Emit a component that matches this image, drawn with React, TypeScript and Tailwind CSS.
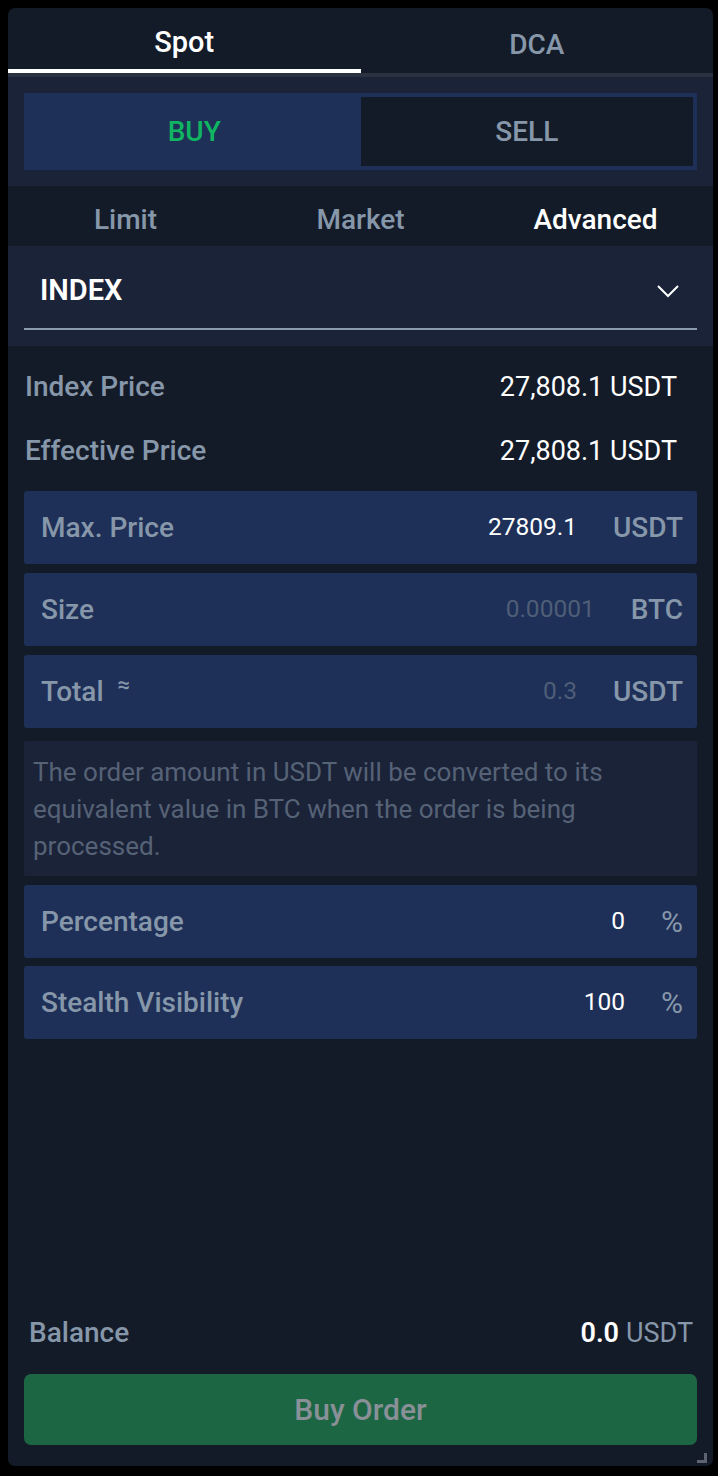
import React from "react";

const font = { fontFamily: "Roboto, 'Noto Sans', sans-serif" };

function Field({ label, value, unit, valueClass, unitClass, extra }: { label: string; value: string; unit: string; valueClass: string; unitClass?: string; extra?: React.ReactNode }) {
  return (
    <div className="flex h-[73px] items-center rounded-[3px] bg-[#1e3058] pl-[17px] pr-[14px] text-[28px] font-medium">
      <div className="flex flex-1 items-center text-[#8797aa]">
        <span>{label}</span>
        {extra}
      </div>
      <span className={"text-[24.5px] font-normal " + valueClass}>{value}</span>
      <span className={"text-[#8797aa] " + (unitClass ?? "ml-[36px]")}>{unit}</span>
    </div>
  );
}

export default function App() {
  return (
    <div className="h-[1476px] w-[718px] bg-black pl-[8px] pr-[5px] pt-[8px] pb-[10px]" style={font}>
      <div className="relative flex h-full flex-col overflow-hidden rounded-[7px] bg-[#141b28]">
        {/* tabs */}
        <div className="flex h-[65px]">
          <div className="flex flex-1 items-center justify-center border-b-[4px] border-white pt-[8px] text-[29px] font-medium text-white">Spot</div>
          <div className="flex flex-1 items-center justify-center border-b-[4px] border-transparent pt-[12px] text-[28px] font-medium text-[#8797aa]">DCA</div>
        </div>
        <div className="h-[4px] bg-[#2a3141]" />
        {/* buy/sell */}
        <div className="bg-[#1b2339] px-[16px] pt-[16px] pb-[16px]">
          <div className="grid h-[77px] grid-cols-2 bg-[#1e3058] p-[4px]">
            <div className="flex items-center justify-center text-[28px] font-medium text-[#10b561]">BUY</div>
            <div className="flex items-center justify-center bg-[#141b28] text-[28px] font-medium text-[#8797aa]">SELL</div>
          </div>
        </div>
        {/* order type */}
        <div className="grid h-[60px] grid-cols-3 bg-[#141b28] pt-[8px] text-[28px] font-medium">
          <div className="flex items-center justify-center text-[#8797aa]">Limit</div>
          <div className="flex items-center justify-center text-[#8797aa]">Market</div>
          <div className="flex items-center justify-center text-white">Advanced</div>
        </div>
        {/* index select */}
        <div className="bg-[#1b2339] px-[16px] pb-[16px]">
          <div className="flex h-[84px] items-center border-b-[2px] border-[#8a9bb0] pl-[16px] pr-[18px] pt-[8px]">
            <span className="flex-1 text-[29px] font-semibold text-white">INDEX</span>
            <svg width="22" height="14" viewBox="0 0 22 14" fill="none" stroke="white" strokeWidth="2">
              <path d="M1 2 L11 12 L21 2" />
            </svg>
          </div>
        </div>
        {/* content */}
        <div className="flex flex-1 flex-col px-[16px] pt-[9px]">
          <div className="flex h-[64px] items-center pl-[1px] pr-[20px] text-[28px]">
            <span className="flex-1 font-medium text-[#8797aa]">Index Price</span>
            <span className="text-[27px] text-white">27,808.1 USDT</span>
          </div>
          <div className="flex h-[64px] items-center pl-[1px] pr-[20px] text-[28px]">
            <span className="flex-1 font-medium text-[#8797aa]">Effective Price</span>
            <span className="text-[27px] text-white">27,808.1 USDT</span>
          </div>
          <div className="mt-[8px] flex flex-col gap-[9px]">
            <Field label="Max. Price" value="27809.1" unit="USDT" valueClass="text-white" />
            <Field label="Size" value="0.00001" unit="BTC" valueClass="text-[#4f5e77]" />
            <Field
              label="Total"
              value="0.3"
              unit="USDT"
              valueClass="text-[#4f5e77]"
              extra={<span className="ml-[14px] -translate-y-[7px] text-[22px]">≈</span>}
            />
          </div>
          <div className="mt-[13px] h-[135px] rounded-[2px] bg-[#1b2339] pl-[9px] pr-[12px] pt-[13px] text-[26px] leading-[37px] text-[#566276]">
            The order amount in USDT will be converted to its equivalent value in BTC when the order is being processed.
          </div>
          <div className="mt-[9px] flex flex-col gap-[8px]">
            <Field label="Percentage" value="0" unit="%" valueClass="text-white" unitClass="ml-[36px] text-[30px] font-normal" />
            <Field label="Stealth Visibility" value="100" unit="%" valueClass="text-white" unitClass="ml-[36px] text-[30px] font-normal" />
          </div>
          <div className="flex-1" />
          <div className="flex items-center pl-[5px] pr-[4px] text-[28px] font-medium">
            <span className="flex-1 text-[#8797aa]">Balance</span>
            <span className="text-[27px] font-semibold text-white">0.0</span>
            <span className="ml-[7px] text-[27px] font-normal text-[#8797aa]">USDT</span>
          </div>
          <div className="mt-[20px] mb-[21px] flex h-[71px] items-center justify-center rounded-[7px] bg-[#1d6644] text-[30px] font-medium text-[#8a9097]">
            Buy Order
          </div>
        </div>
        <div className="absolute bottom-[3px] right-[6px] h-[10px] w-[10px] border-b-[3px] border-r-[3px] border-[#5e6370]" />
      </div>
    </div>
  );
}
